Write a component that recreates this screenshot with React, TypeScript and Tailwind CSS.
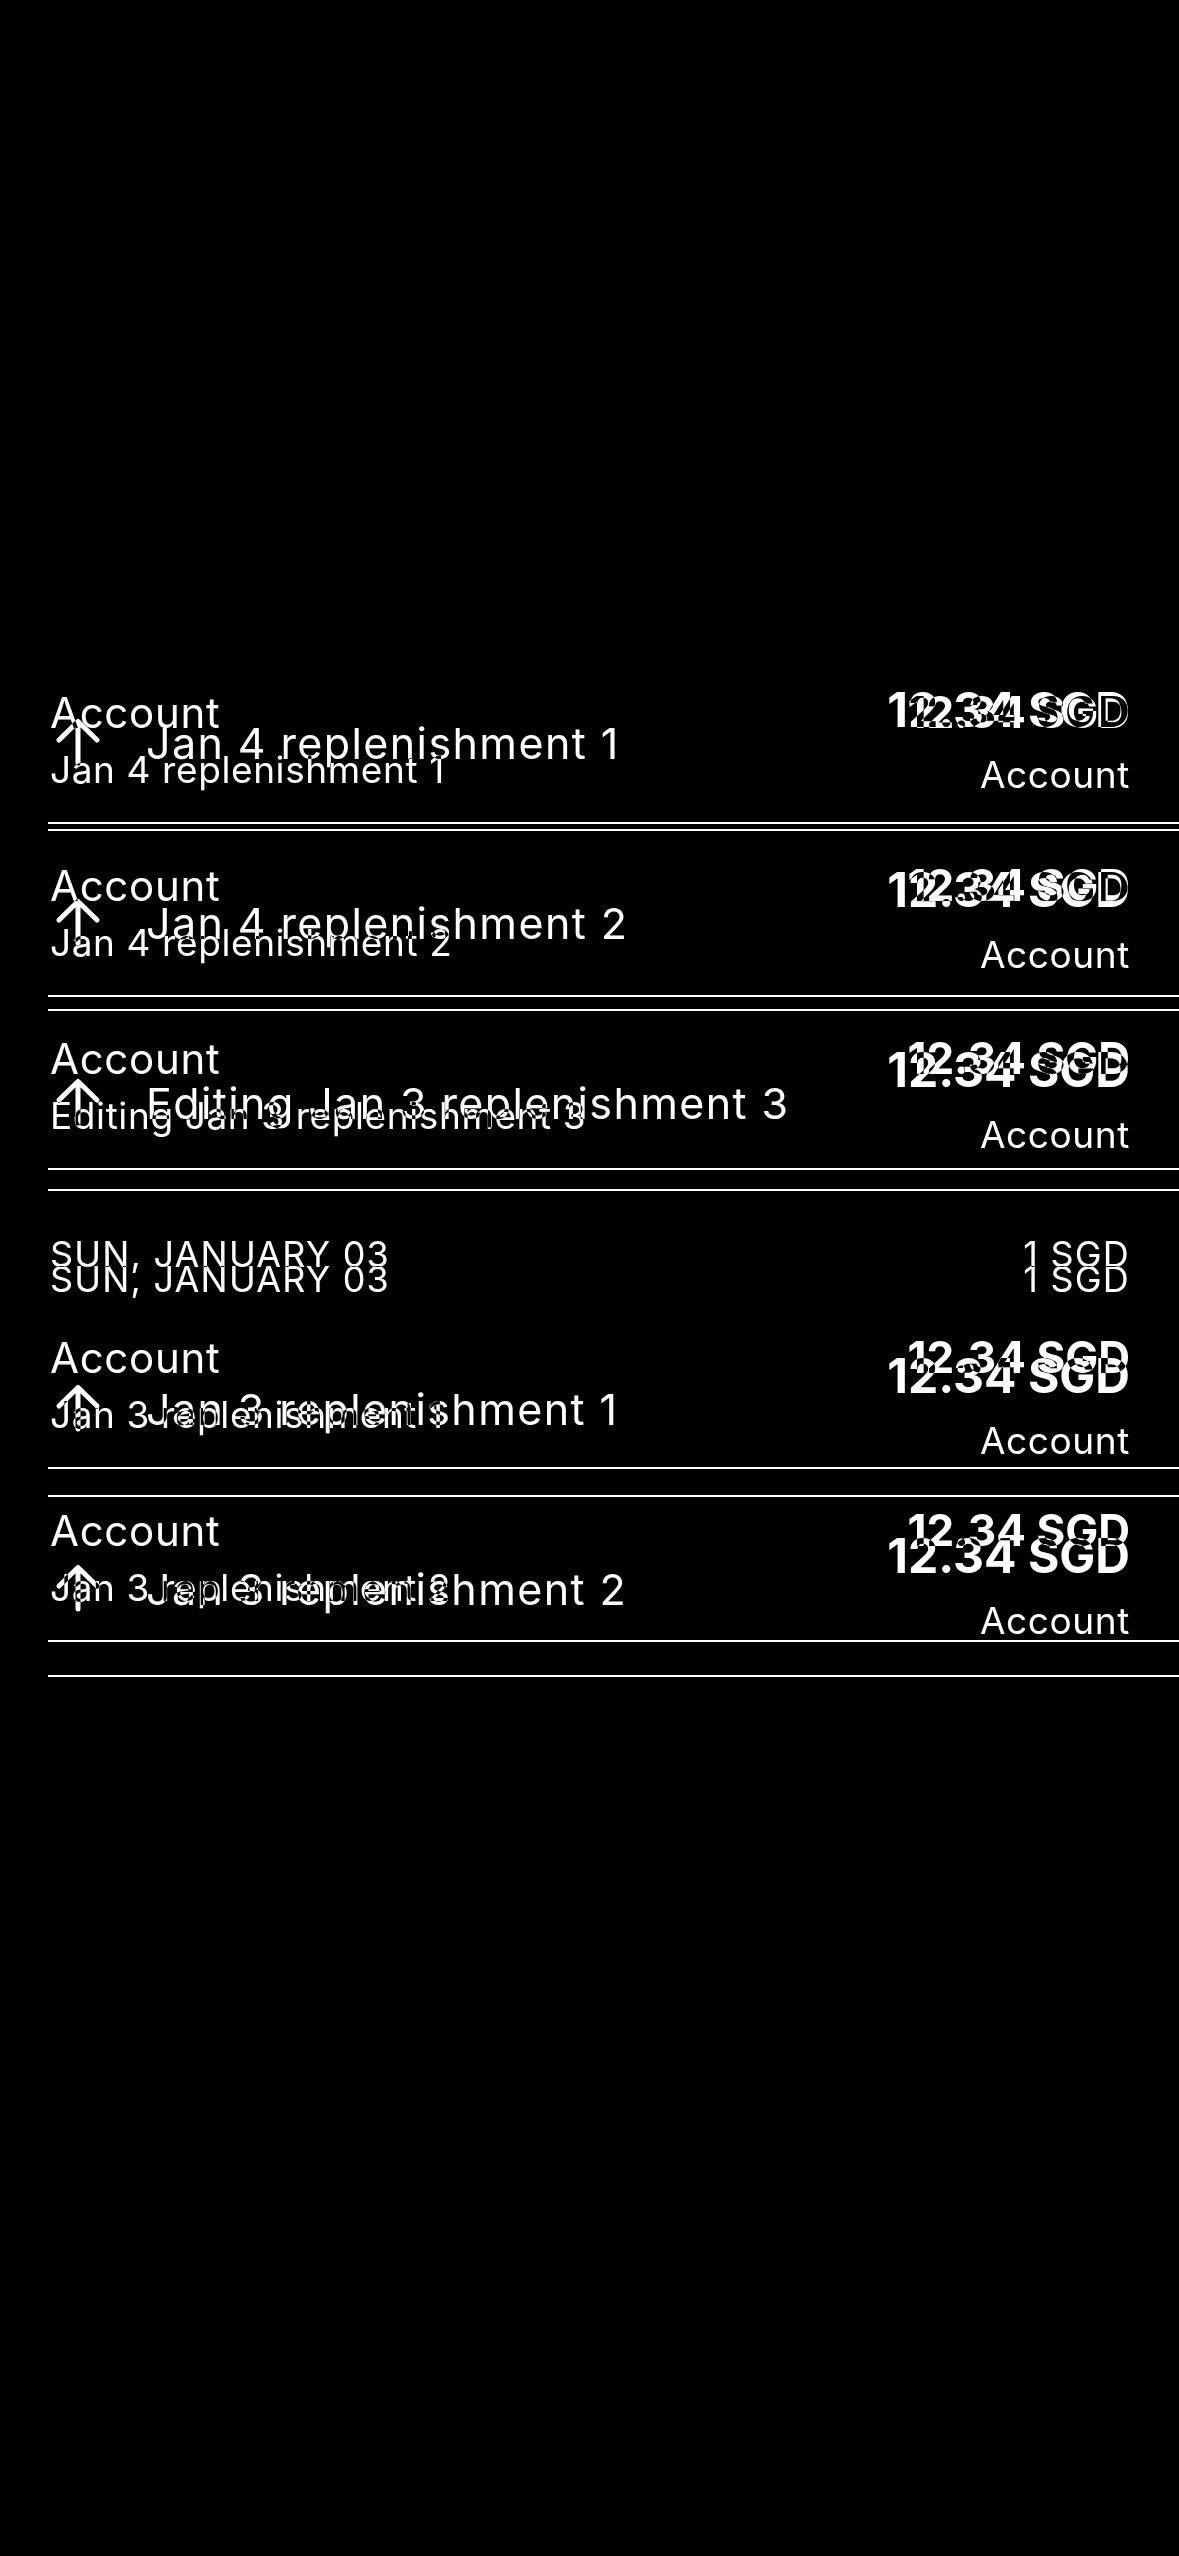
import React from "react";

type Row = { title: string };

const rowsTop: Row[] = [
  { title: "Jan 4 replenishment 1" },
  { title: "Jan 4 replenishment 2" },
  { title: "Editing Jan 3 replenishment 3" },
];
const rowsBottom: Row[] = [
  { title: "Jan 3 replenishment 1" },
  { title: "Jan 3 replenishment 2" },
];

function ArrowUp() {
  return (
    <svg width="48" height="48" viewBox="0 0 48 48" fill="none" className="shrink-0">
      <path
        d="M24 4 V45 M5 22 L24 3.5 L43 22"
        stroke="white"
        strokeWidth="5"
        strokeLinecap="round"
        strokeLinejoin="round"
      />
    </svg>
  );
}

function RowA({ title }: Row) {
  return (
    <div className="ml-[48px] flex h-[173px] justify-between border-b-2 border-white pl-[2px] pr-[49px]">
      <div className="flex flex-col pt-[37px]">
        <div className="text-[42px] leading-[50px] tracking-[0.7px] whitespace-nowrap">Account</div>
        <div className="mt-[10px] text-[37px] leading-[44px] tracking-[0.6px] whitespace-nowrap">{title}</div>
      </div>
      <div className="pt-[36px]">
        <div className="text-[44px] leading-[50px] font-bold whitespace-nowrap">12.34 SGD</div>
      </div>
    </div>
  );
}

function HeaderA() {
  return (
    <div className="ml-[48px] flex h-[126px] justify-between pl-[2px] pr-[49px] pt-[64px] text-[36px] leading-[40px] tracking-[1.2px]">
      <div>SUN, JANUARY 03</div>
      <div>1 SGD</div>
    </div>
  );
}

function RowB({ title }: Row) {
  return (
    <div className="ml-[48px] flex h-[180px] justify-between border-b-2 border-white pr-[49px]">
      <div className="flex items-start gap-[44px] pl-[6px] pt-[67px]">
        <ArrowUp />
        <div className="text-[43px] leading-[50px] tracking-[1.4px] whitespace-nowrap">{title}</div>
      </div>
      <div className="flex flex-col items-end pt-[31px]">
        <div className="text-[48px] leading-[56px] font-bold whitespace-nowrap">12.34 SGD</div>
        <div className="mt-[15px] text-[37px] leading-[44px] tracking-[0.6px] whitespace-nowrap">Account</div>
      </div>
    </div>
  );
}

function HeaderB() {
  return (
    <div className="ml-[48px] flex h-[126px] justify-between pl-[2px] pr-[49px] pt-[68px] text-[36px] leading-[40px] tracking-[1.2px]">
      <div>SUN, JANUARY 03</div>
      <div>1 SGD</div>
    </div>
  );
}

export default function App() {
  return (
    <div className="relative isolate min-h-[2556px] w-full overflow-hidden bg-black text-white font-[Inter,'Noto_Sans',sans-serif]">
      <div className="pt-[651px]">
        {rowsTop.map((r) => (
          <RowA key={r.title} title={r.title} />
        ))}
        <HeaderA />
        {rowsBottom.map((r) => (
          <RowA key={r.title} title={r.title} />
        ))}
      </div>
      <div className="pointer-events-none absolute inset-x-0 top-0 pt-[651px] mix-blend-difference">
        {rowsTop.map((r) => (
          <RowB key={r.title} title={r.title} />
        ))}
        <HeaderB />
        {rowsBottom.map((r) => (
          <RowB key={r.title} title={r.title} />
        ))}
      </div>
    </div>
  );
}
